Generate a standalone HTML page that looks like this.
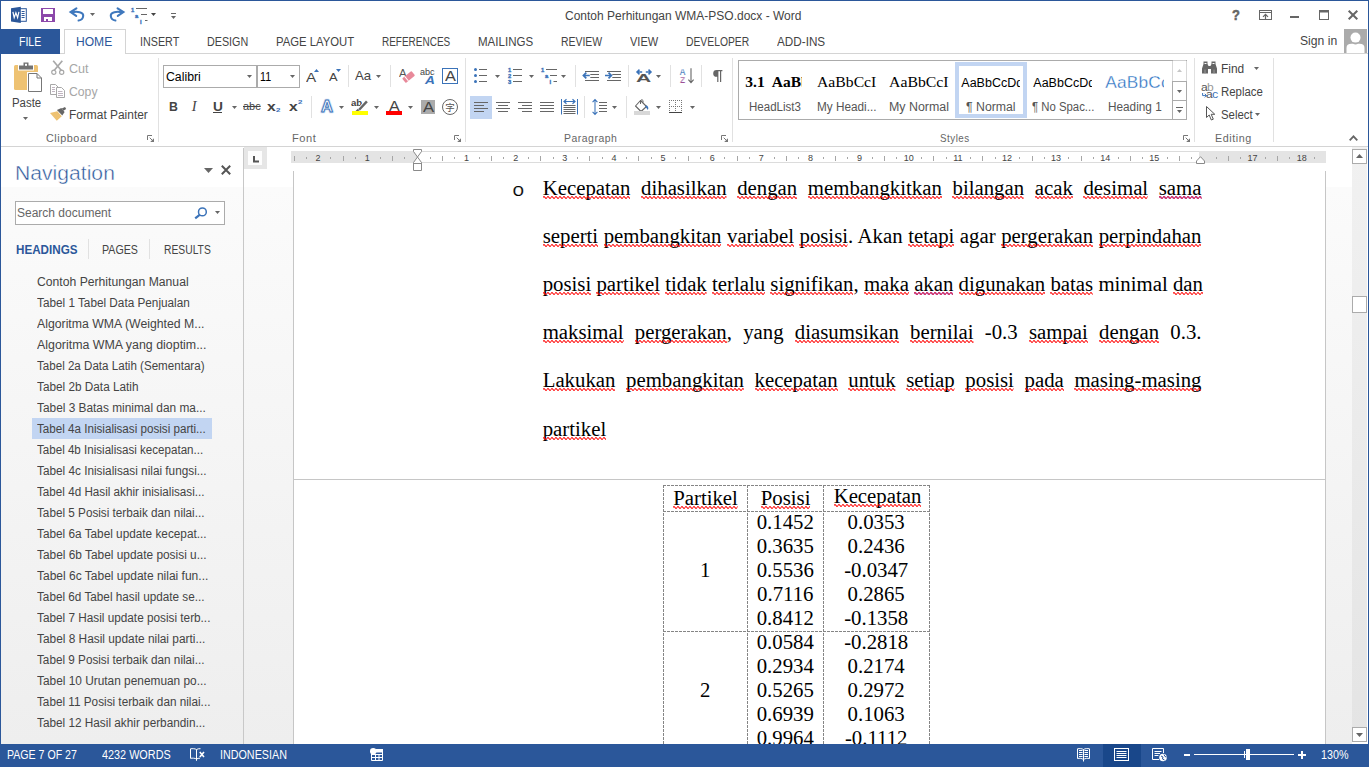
<!DOCTYPE html>
<html lang="id">
<head>
<meta charset="utf-8">
<title>Contoh Perhitungan WMA-PSO.docx - Word</title>
<style>
*{box-sizing:border-box;margin:0;padding:0}
html,body{width:1369px;height:767px;overflow:hidden;background:#fff}
body{position:relative;font-family:"Liberation Sans",sans-serif;font-size:12px;color:#444}
.abs{position:absolute}
.t{position:absolute;white-space:nowrap;line-height:1;transform-origin:0 0}
svg{position:absolute;overflow:visible}
.dl{position:absolute;white-space:nowrap;line-height:1;font-family:"Liberation Serif",serif;font-size:20.8px;color:#000}
.sq{position:relative;display:inline-block}
.z{left:0;top:18.25px;width:100%;height:3px;overflow:hidden}
</style>
</head>
<body>
<svg width="0" height="0" style="left:0;top:0"><defs><pattern id="zz" width="4" height="3" patternUnits="userSpaceOnUse"><path d="M0 1.5L1 0.5L3 2.5L4 1.5" fill="none" stroke="#f00" stroke-width="1.05"/></pattern><pattern id="zb" width="4" height="3" patternUnits="userSpaceOnUse"><path d="M0 1.5L1 0.5L3 2.5L4 1.5" fill="none" stroke="#a9a0f0" stroke-width="2.1"/><path d="M0 1.5L1 0.5L3 2.5L4 1.5" fill="none" stroke="#e8103a" stroke-width="1.05"/></pattern></defs></svg>
<!-- workspace background + navigation pane -->
<div class="abs" style="left:1px;top:147px;width:1367px;height:597px;background:linear-gradient(#fff 0,#fff 40px,#fbfbfb 40px,#eee 100%);"></div>
<div class="abs" style="left:243px;top:148px;width:1px;height:596px;background:#c8c8c8;"></div>
<div class="t" id="t0" style="left:15.4px;top:163.25px;font-size:20.5px;color:#2b579a;-webkit-text-stroke:0.45px #fff;transform:scaleX(1.0312);">Navigation</div>
<svg width="9" height="5" style="left:204px;top:168px"><path d="M0 0H9L4.5 5Z" fill="#666"/></svg>
<svg width="10" height="10" style="left:221px;top:165px"><path d="M0.8 0.8L9.2 9.2M9.2 0.8L0.8 9.2" stroke="#555" stroke-width="2"/></svg>
<div class="abs" style="left:15px;top:201px;width:210px;height:24px;background:#fff;border:1px solid #ababab;"></div>
<div class="t" id="t1" style="left:17.3px;top:207.00px;color:#666;transform:scaleX(1.0004);">Search document</div>
<svg width="14" height="12" style="left:194px;top:207px"><circle cx="8.4" cy="4.9" r="3.9" fill="none" stroke="#3b73b9" stroke-width="1.5"/><path d="M5.6 7.9L1.2 11.3" stroke="#3b73b9" stroke-width="2.2"/></svg>
<svg width="5" height="3" style="left:215px;top:211px"><path d="M0 0H5 L2.5 3 Z" fill="#666"/></svg>
<div class="t" id="t2" style="left:15.8px;top:244.00px;color:#2b579a;font-weight:bold;transform:scaleX(0.9709);">HEADINGS</div>
<div class="abs" style="left:88px;top:239px;width:1px;height:20px;background:#e1e1e1;"></div>
<div class="t" id="t3" style="left:101.7px;top:244.00px;transform:scaleX(0.8871);">PAGES</div>
<div class="abs" style="left:149px;top:239px;width:1px;height:20px;background:#e1e1e1;"></div>
<div class="t" id="t4" style="left:163.8px;top:244.00px;transform:scaleX(0.8592);">RESULTS</div>
<div class="abs" style="left:32px;top:418px;width:180px;height:21px;background:#c2d5f2;"></div>
<div class="t" id="t5" style="left:36.8px;top:276.30px;transform:scaleX(1.0145);">Contoh Perhitungan Manual</div>
<div class="t" id="t6" style="left:36.8px;top:297.30px;transform:scaleX(0.9801);">Tabel 1 Tabel Data Penjualan</div>
<div class="t" id="t7" style="left:36.8px;top:318.30px;transform:scaleX(1.0224);">Algoritma WMA (Weighted M...</div>
<div class="t" id="t8" style="left:36.8px;top:339.30px;transform:scaleX(1.0331);">Algoritma WMA yang dioptim...</div>
<div class="t" id="t9" style="left:36.8px;top:360.30px;transform:scaleX(0.9658);">Tabel 2a Data Latih (Sementara)</div>
<div class="t" id="t10" style="left:36.8px;top:381.30px;transform:scaleX(0.9816);">Tabel 2b Data Latih</div>
<div class="t" id="t11" style="left:36.8px;top:402.30px;transform:scaleX(0.9886);">Tabel 3 Batas minimal dan ma...</div>
<div class="t" id="t12" style="left:36.8px;top:423.30px;transform:scaleX(0.9696);">Tabel 4a Inisialisasi posisi parti...</div>
<div class="t" id="t13" style="left:36.8px;top:444.30px;transform:scaleX(0.9657);">Tabel 4b Inisialisasi kecepatan...</div>
<div class="t" id="t14" style="left:36.8px;top:465.30px;transform:scaleX(0.9817);">Tabel 4c Inisialisasi nilai fungsi...</div>
<div class="t" id="t15" style="left:36.8px;top:486.30px;transform:scaleX(0.9734);">Tabel 4d Hasil akhir inisialisasi...</div>
<div class="t" id="t16" style="left:36.8px;top:507.30px;transform:scaleX(0.9770);">Tabel 5 Posisi terbaik dan nilai...</div>
<div class="t" id="t17" style="left:36.8px;top:528.30px;transform:scaleX(0.9827);">Tabel 6a Tabel update kecepat...</div>
<div class="t" id="t18" style="left:36.8px;top:549.30px;transform:scaleX(0.9905);">Tabel 6b Tabel update posisi u...</div>
<div class="t" id="t19" style="left:36.8px;top:570.30px;transform:scaleX(1.0004);">Tabel 6c Tabel update nilai fun...</div>
<div class="t" id="t20" style="left:36.8px;top:591.30px;transform:scaleX(0.9782);">Tabel 6d Tabel hasil update se...</div>
<div class="t" id="t21" style="left:36.8px;top:612.30px;transform:scaleX(0.9810);">Tabel 7 Hasil update posisi terb...</div>
<div class="t" id="t22" style="left:36.8px;top:633.30px;transform:scaleX(0.9894);">Tabel 8 Hasil update nilai parti...</div>
<div class="t" id="t23" style="left:36.8px;top:654.30px;transform:scaleX(0.9770);">Tabel 9 Posisi terbaik dan nilai...</div>
<div class="t" id="t24" style="left:36.8px;top:675.30px;transform:scaleX(0.9892);">Tabel 10 Urutan penemuan po...</div>
<div class="t" id="t25" style="left:36.8px;top:696.30px;transform:scaleX(0.9785);">Tabel 11 Posisi terbaik dan nilai...</div>
<div class="t" id="t26" style="left:36.8px;top:717.30px;transform:scaleX(0.9817);">Tabel 12 Hasil akhir perbandin...</div>
<!-- ruler -->
<div class="abs" style="left:244px;top:147px;width:23px;height:22px;background:#e6e6e6;"></div>
<div class="abs" style="left:248px;top:151px;width:14px;height:14px;background:#fdfdfd;"></div>
<svg width="6" height="7" style="left:253px;top:156px"><path d="M1 0V5.5H6" fill="none" stroke="#555" stroke-width="2"/></svg>
<div class="abs" style="left:291px;top:151px;width:1035px;height:12px;background:#e4e4e4;"></div>
<div class="abs" style="left:417px;top:151px;width:782px;height:12px;background:#fff;border-top:1px solid #dcdcdc;border-bottom:1px solid #dcdcdc;"></div>
<svg width="1035" height="12" style="left:291px;top:151px"><path d="M3.5 5V10M15.5 6V8M39.5 6V8M52.5 5V10M64.5 6V8M89.5 6V8M101.5 5V10M113.5 6V8M139.5 6V8M151.5 5V10M163.5 6V8M188.5 6V8M200.5 5V10M212.5 6V8M237.5 6V8M249.5 5V10M262.5 6V8M286.5 6V8M298.5 5V10M311.5 6V8M335.5 6V8M347.5 5V10M360.5 6V8M384.5 6V8M397.5 5V10M409.5 6V8M433.5 6V8M446.5 5V10M458.5 6V8M483.5 6V8M495.5 5V10M507.5 6V8M532.5 6V8M544.5 5V10M556.5 6V8M581.5 6V8M593.5 5V10M605.5 6V8M630.5 6V8M642.5 5V10M655.5 6V8M679.5 6V8M691.5 5V10M704.5 6V8M728.5 6V8M741.5 5V10M753.5 6V8M777.5 6V8M790.5 5V10M802.5 6V8M827.5 6V8M839.5 5V10M851.5 6V8M876.5 6V8M888.5 5V10M900.5 6V8M925.5 6V8M937.5 5V10M949.5 6V8M974.5 6V8M986.5 5V10M998.5 6V8M1023.5 6V8" stroke="#a6a6a6" stroke-width="1" fill="none"/><g font-family="Liberation Sans, sans-serif" font-size="9" fill="#444"><text x="27.1" y="10" text-anchor="middle">2</text><text x="76.3" y="10" text-anchor="middle">1</text><text x="175.5" y="10" text-anchor="middle">1</text><text x="224.7" y="10" text-anchor="middle">2</text><text x="273.8" y="10" text-anchor="middle">3</text><text x="322.9" y="10" text-anchor="middle">4</text><text x="372.0" y="10" text-anchor="middle">5</text><text x="421.2" y="10" text-anchor="middle">6</text><text x="470.3" y="10" text-anchor="middle">7</text><text x="519.4" y="10" text-anchor="middle">8</text><text x="568.6" y="10" text-anchor="middle">9</text><text x="617.7" y="10" text-anchor="middle">10</text><text x="666.8" y="10" text-anchor="middle">11</text><text x="716.0" y="10" text-anchor="middle">12</text><text x="765.1" y="10" text-anchor="middle">13</text><text x="814.2" y="10" text-anchor="middle">14</text><text x="863.3" y="10" text-anchor="middle">15</text><text x="961.6" y="10" text-anchor="middle">17</text><text x="1010.7" y="10" text-anchor="middle">18</text></g></svg>
<svg width="9" height="22" style="left:413px;top:149px"><path d="M0.5 0.5H8.5V2.5L4.5 8L8.5 13.5V21.5H0.5V13.5L4.5 8L0.5 2.5Z" fill="#fff" stroke="#8a8a8a" stroke-width="1"/><path d="M0.5 14.5H8.5" stroke="#8a8a8a"/></svg>
<svg width="9" height="8" style="left:1196px;top:156px"><path d="M4.5 0.7L8.5 5V7.5H0.5V5Z" fill="#fff" stroke="#8a8a8a" stroke-width="1"/></svg>
<!-- page -->
<div class="abs" style="left:293px;top:171px;width:1033px;height:573px;background:#fff;border-left:1px solid #c6c6c6;border-right:1px solid #c6c6c6;"></div>
<div class="abs" style="left:293px;top:479px;width:1033px;height:1px;background:#c6c6c6;"></div>
<div class="abs" style="left:1352px;top:147px;width:15px;height:597px;background:linear-gradient(#f1f1f1,#e4e4e4);"></div>
<div class="abs" style="left:1367px;top:147px;width:1px;height:597px;background:#fff;"></div>
<div class="abs" style="left:1352px;top:742px;width:16px;height:2px;background:#fff;"></div>
<div class="abs" style="left:1352px;top:149px;width:15px;height:15px;background:#fff;border:1px solid #ababab;"></div>
<svg width="7" height="4" style="left:1356px;top:154px"><path d="M0 4H7L3.5 0Z" fill="#666"/></svg>
<div class="abs" style="left:1352px;top:296px;width:15px;height:17px;background:#fff;border:1px solid #ababab;"></div>
<div class="abs" style="left:1352px;top:727px;width:15px;height:15px;background:#fff;border:1px solid #ababab;"></div>
<svg width="7" height="4" style="left:1356px;top:733px"><path d="M0 0H7L3.5 4Z" fill="#666"/></svg>
<div class="t" id="bullet" style="left:511.6px;top:182.8px;font-size:17.5px;color:#000;font-family:'Liberation Mono',monospace;-webkit-text-stroke:0.2px #fff;transform:scaleX(1.2)">o</div>
<!-- body text -->
<div class="dl" style="left:542.7px;top:178.00px;width:658.8px;text-align:justify;text-align-last:justify;"><span class="sq">Kecepatan<svg class="z"><rect width="100%" height="3" fill="url(#zz)"/></svg></span> <span class="sq">dihasilkan<svg class="z"><rect width="100%" height="3" fill="url(#zz)"/></svg></span> <span class="sq">dengan<svg class="z"><rect width="100%" height="3" fill="url(#zz)"/></svg></span> <span class="sq">membangkitkan<svg class="z"><rect width="100%" height="3" fill="url(#zz)"/></svg></span> <span class="sq">bilangan<svg class="z"><rect width="100%" height="3" fill="url(#zz)"/></svg></span> <span class="sq">acak<svg class="z"><rect width="100%" height="3" fill="url(#zz)"/></svg></span> <span class="sq">desimal<svg class="z"><rect width="100%" height="3" fill="url(#zz)"/></svg></span> <span class="sq sb">sama<svg class="z"><rect width="100%" height="3" fill="url(#zb)"/></svg></span></div>
<div class="dl" style="left:542.7px;top:226.00px;width:658.8px;text-align:justify;text-align-last:justify;"><span class="sq">seperti<svg class="z"><rect width="100%" height="3" fill="url(#zz)"/></svg></span> <span class="sq">pembangkitan<svg class="z"><rect width="100%" height="3" fill="url(#zz)"/></svg></span> <span class="sq">variabel<svg class="z"><rect width="100%" height="3" fill="url(#zz)"/></svg></span> <span class="sq">posisi<svg class="z"><rect width="100%" height="3" fill="url(#zz)"/></svg></span>. Akan <span class="sq">tetapi<svg class="z"><rect width="100%" height="3" fill="url(#zz)"/></svg></span> agar <span class="sq">pergerakan<svg class="z"><rect width="100%" height="3" fill="url(#zz)"/></svg></span> <span class="sq">perpindahan<svg class="z"><rect width="100%" height="3" fill="url(#zz)"/></svg></span></div>
<div class="dl" style="left:542.7px;top:274.00px;width:658.8px;text-align:justify;text-align-last:justify;"><span class="sq">posisi<svg class="z"><rect width="100%" height="3" fill="url(#zz)"/></svg></span> <span class="sq">partikel<svg class="z"><rect width="100%" height="3" fill="url(#zz)"/></svg></span> <span class="sq">tidak<svg class="z"><rect width="100%" height="3" fill="url(#zz)"/></svg></span> <span class="sq">terlalu<svg class="z"><rect width="100%" height="3" fill="url(#zz)"/></svg></span> <span class="sq">signifikan<svg class="z"><rect width="100%" height="3" fill="url(#zz)"/></svg></span>, <span class="sq">maka<svg class="z"><rect width="100%" height="3" fill="url(#zz)"/></svg></span> <span class="sq sb">akan<svg class="z"><rect width="100%" height="3" fill="url(#zb)"/></svg></span> <span class="sq">digunakan<svg class="z"><rect width="100%" height="3" fill="url(#zz)"/></svg></span> <span class="sq">batas<svg class="z"><rect width="100%" height="3" fill="url(#zz)"/></svg></span> minimal <span class="sq">dan<svg class="z"><rect width="100%" height="3" fill="url(#zz)"/></svg></span></div>
<div class="dl" style="left:542.7px;top:322.00px;width:658.8px;text-align:justify;text-align-last:justify;"><span class="sq">maksimal<svg class="z"><rect width="100%" height="3" fill="url(#zz)"/></svg></span> <span class="sq">pergerakan<svg class="z"><rect width="100%" height="3" fill="url(#zz)"/></svg></span>, yang <span class="sq">diasumsikan<svg class="z"><rect width="100%" height="3" fill="url(#zz)"/></svg></span> <span class="sq">bernilai<svg class="z"><rect width="100%" height="3" fill="url(#zz)"/></svg></span> -0.3 <span class="sq">sampai<svg class="z"><rect width="100%" height="3" fill="url(#zz)"/></svg></span> <span class="sq">dengan<svg class="z"><rect width="100%" height="3" fill="url(#zz)"/></svg></span> 0.3.</div>
<div class="dl" style="left:542.7px;top:370.00px;width:658.8px;text-align:justify;text-align-last:justify;"><span class="sq">Lakukan<svg class="z"><rect width="100%" height="3" fill="url(#zz)"/></svg></span> <span class="sq">pembangkitan<svg class="z"><rect width="100%" height="3" fill="url(#zz)"/></svg></span> <span class="sq">kecepatan<svg class="z"><rect width="100%" height="3" fill="url(#zz)"/></svg></span> <span class="sq">untuk<svg class="z"><rect width="100%" height="3" fill="url(#zz)"/></svg></span> <span class="sq">setiap<svg class="z"><rect width="100%" height="3" fill="url(#zz)"/></svg></span> <span class="sq">posisi<svg class="z"><rect width="100%" height="3" fill="url(#zz)"/></svg></span> <span class="sq">pada<svg class="z"><rect width="100%" height="3" fill="url(#zz)"/></svg></span> <span class="sq">masing-masing<svg class="z"><rect width="100%" height="3" fill="url(#zz)"/></svg></span></div>
<div class="dl" style="left:542.7px;top:419.00px;width:658.8px;"><span class="sq">partikel<svg class="z"><rect width="100%" height="3" fill="url(#zz)"/></svg></span></div>
<!-- table -->
<div class="abs" style="left:663px;top:485px;width:267px;height:1px;background:repeating-linear-gradient(90deg,#858585 0,#858585 3px,transparent 3px,transparent 4px);"></div>
<div class="abs" style="left:663px;top:511px;width:267px;height:1px;background:repeating-linear-gradient(90deg,#858585 0,#858585 3px,transparent 3px,transparent 4px);"></div>
<div class="abs" style="left:663px;top:631px;width:267px;height:1px;background:repeating-linear-gradient(90deg,#858585 0,#858585 3px,transparent 3px,transparent 4px);"></div>
<div class="abs" style="left:663px;top:485px;width:1px;height:259px;background:repeating-linear-gradient(180deg,#858585 0,#858585 3px,transparent 3px,transparent 4px);"></div>
<div class="abs" style="left:747px;top:485px;width:1px;height:259px;background:repeating-linear-gradient(180deg,#858585 0,#858585 3px,transparent 3px,transparent 4px);"></div>
<div class="abs" style="left:823px;top:485px;width:1px;height:259px;background:repeating-linear-gradient(180deg,#858585 0,#858585 3px,transparent 3px,transparent 4px);"></div>
<div class="abs" style="left:929px;top:485px;width:1px;height:259px;background:repeating-linear-gradient(180deg,#858585 0,#858585 3px,transparent 3px,transparent 4px);"></div>
<div class="dl" style="left:645.5px;top:488.00px;width:120px;text-align:center"><span class="sq">Partikel<svg class="z"><rect width="100%" height="3" fill="url(#zz)"/></svg></span></div>
<div class="dl" style="left:725.6px;top:488.00px;width:120px;text-align:center"><span class="sq">Posisi<svg class="z"><rect width="100%" height="3" fill="url(#zz)"/></svg></span></div>
<div class="dl" style="left:817.5px;top:486.00px;width:120px;text-align:center"><span class="sq">Kecepatan<svg class="z"><rect width="100%" height="3" fill="url(#zz)"/></svg></span></div>
<div class="dl" style="left:725.3px;top:512.00px;width:120px;text-align:center">0.1452</div>
<div class="dl" style="left:816.2px;top:512.00px;width:120px;text-align:center">0.0353</div>
<div class="dl" style="left:725.3px;top:536.00px;width:120px;text-align:center">0.3635</div>
<div class="dl" style="left:816.2px;top:536.00px;width:120px;text-align:center">0.2436</div>
<div class="dl" style="left:725.3px;top:560.00px;width:120px;text-align:center">0.5536</div>
<div class="dl" style="left:816.2px;top:560.00px;width:120px;text-align:center">-0.0347</div>
<div class="dl" style="left:725.3px;top:584.00px;width:120px;text-align:center">0.7116</div>
<div class="dl" style="left:816.2px;top:584.00px;width:120px;text-align:center">0.2865</div>
<div class="dl" style="left:725.3px;top:608.00px;width:120px;text-align:center">0.8412</div>
<div class="dl" style="left:816.2px;top:608.00px;width:120px;text-align:center">-0.1358</div>
<div class="dl" style="left:725.3px;top:632.00px;width:120px;text-align:center">0.0584</div>
<div class="dl" style="left:816.2px;top:632.00px;width:120px;text-align:center">-0.2818</div>
<div class="dl" style="left:725.3px;top:656.00px;width:120px;text-align:center">0.2934</div>
<div class="dl" style="left:816.2px;top:656.00px;width:120px;text-align:center">0.2174</div>
<div class="dl" style="left:725.3px;top:680.00px;width:120px;text-align:center">0.5265</div>
<div class="dl" style="left:816.2px;top:680.00px;width:120px;text-align:center">0.2972</div>
<div class="dl" style="left:725.3px;top:704.00px;width:120px;text-align:center">0.6939</div>
<div class="dl" style="left:816.2px;top:704.00px;width:120px;text-align:center">0.1063</div>
<div class="dl" style="left:725.3px;top:728.00px;width:120px;text-align:center">0.9964</div>
<div class="dl" style="left:816.2px;top:728.00px;width:120px;text-align:center">-0.1112</div>
<div class="dl" style="left:645.2px;top:560.00px;width:120px;text-align:center">1</div>
<div class="dl" style="left:645.2px;top:680.00px;width:120px;text-align:center">2</div>
<!-- title bar -->
<svg width="17" height="17" style="left:11px;top:6px"><rect x="8" y="2.7" width="7.3" height="12.6" fill="#fff" stroke="#2b579a" stroke-width="1"/>
<path d="M10.6 5.5h3M10.6 7.5h3M10.6 9.5h3M10.6 11.5h3" stroke="#2b579a" stroke-width="1"/>
<path d="M0 2.2L9.8 0.8V17L0 15.6Z" fill="#2b579a"/>
<path d="M1.9 5.8L3.2 11.6L4.9 6.8L6.6 11.6L7.9 5.8" fill="none" stroke="#fff" stroke-width="1.2" stroke-linejoin="miter"/></svg>
<svg width="14" height="14" style="left:41px;top:8px"><path d="M0 0H14V14H0Z" fill="#8c48aa"/><rect x="2" y="1" width="10" height="5" fill="#fff"/><rect x="3" y="9" width="8" height="4" fill="#fff"/><rect x="5" y="11" width="2" height="2" fill="#8c48aa"/></svg>
<svg width="16" height="15" style="left:69px;top:7px"><path d="M3 5.3C8 4 14.6 5 14.2 9C13.9 12 11.8 13.2 9.6 13.5" fill="none" stroke="#3f78bd" stroke-width="2.1" stroke-linecap="round"/><path d="M7.4 1.3L1.6 5.1L7.2 8.9" fill="none" stroke="#3f78bd" stroke-width="2.1" stroke-linecap="round" stroke-linejoin="miter"/></svg>
<svg width="5" height="3" style="left:90px;top:13px"><path d="M0 0H5 L2.5 3 Z" fill="#666"/></svg>
<svg width="16" height="15" style="left:109px;top:7px"><g transform="translate(16,0) scale(-1,1)"><path d="M3 5.3C8 4 14.6 5 14.2 9C13.9 12 11.8 13.2 9.6 13.5" fill="none" stroke="#3f78bd" stroke-width="2.1" stroke-linecap="round"/><path d="M7.4 1.3L1.6 5.1L7.2 8.9" fill="none" stroke="#3f78bd" stroke-width="2.1" stroke-linecap="round" stroke-linejoin="miter"/></g></svg>
<svg width="17" height="16" style="left:131px;top:7px"><path d="M5 1.5H16M10 7.5H16M14 13.5H16.5" stroke="#666" stroke-width="1"/>
<text x="0" y="4.5" font-size="5.8" font-weight="bold" stroke="#3b73b9" stroke-width="0.35" fill="#3b73b9" font-family="Liberation Sans, sans-serif">1</text>
<text x="4" y="10.5" font-size="5.8" font-weight="bold" stroke="#3b73b9" stroke-width="0.35" fill="#3b73b9" font-family="Liberation Sans, sans-serif">a</text>
<text x="9" y="16.5" font-size="5.8" font-weight="bold" stroke="#3b73b9" stroke-width="0.35" fill="#3b73b9" font-family="Liberation Sans, sans-serif">i</text></svg>
<svg width="5" height="3" style="left:151px;top:13px"><path d="M0 0H5 L2.5 3 Z" fill="#444"/></svg>
<div class="abs" style="left:171px;top:13px;width:5px;height:1px;background:#666;"></div>
<svg width="5" height="3" style="left:171px;top:16px"><path d="M0 0H5 L2.5 3 Z" fill="#666"/></svg>
<div class="t" id="t27" style="left:564.8px;top:9.75px;font-size:12.5px;transform:scaleX(0.9594);">Contoh Perhitungan WMA-PSO.docx - Word</div>
<div class="t" id="t28" style="left:1232.4px;top:8.00px;font-size:14px;color:#666;font-weight:bold;-webkit-text-stroke:0.5px #666;transform:scaleX(0.9226);">?</div>
<svg width="13" height="10" style="left:1259px;top:10px"><rect x="0.5" y="0.5" width="12" height="9" fill="none" stroke="#666"/><path d="M0 2.5H13" stroke="#666"/><path d="M6.5 9V4.4M4 6.8L6.5 4.3L9 6.8" fill="none" stroke="#666" stroke-width="1.2"/></svg>
<div class="abs" style="left:1290px;top:16px;width:9px;height:2px;background:#666;"></div>
<svg width="10" height="10" style="left:1319px;top:10px"><rect x="0.5" y="0.5" width="9" height="9" fill="none" stroke="#666"/><rect x="0" y="0" width="10" height="2.5" fill="#666"/></svg>
<svg width="10" height="10" style="left:1348px;top:10px"><path d="M0.7 0.7L9.3 9.3M9.3 0.7L0.7 9.3" stroke="#666" stroke-width="2"/></svg>
<!-- tabs -->
<div class="abs" style="left:1px;top:53px;width:1367px;height:1px;background:#d4d4d4;"></div>
<div class="abs" style="left:0px;top:29px;width:60px;height:25px;background:#2b579a;"></div>
<div class="abs" style="left:64px;top:29px;width:62px;height:25px;background:#fff;border:1px solid #d4d4d4;border-bottom:none;"></div>
<div class="t" id="t29" style="left:19.4px;top:36.00px;color:#fff;transform:scaleX(0.8760);">FILE</div>
<div class="t" id="t30" style="left:76.4px;top:36.00px;color:#2b579a;transform:scaleX(1.0056);">HOME</div>
<div class="t" id="t31" style="left:140.4px;top:36.00px;transform:scaleX(0.8950);">INSERT</div>
<div class="t" id="t32" style="left:207.4px;top:36.00px;transform:scaleX(0.8953);">DESIGN</div>
<div class="t" id="t33" style="left:276.4px;top:36.00px;transform:scaleX(0.9431);">PAGE LAYOUT</div>
<div class="t" id="t34" style="left:382.4px;top:36.00px;transform:scaleX(0.8315);">REFERENCES</div>
<div class="t" id="t35" style="left:478.4px;top:36.00px;transform:scaleX(0.9624);">MAILINGS</div>
<div class="t" id="t36" style="left:561.4px;top:36.00px;transform:scaleX(0.8702);">REVIEW</div>
<div class="t" id="t37" style="left:630.4px;top:36.00px;transform:scaleX(0.9194);">VIEW</div>
<div class="t" id="t38" style="left:686.4px;top:36.00px;transform:scaleX(0.8615);">DEVELOPER</div>
<div class="t" id="t39" style="left:777.4px;top:36.00px;transform:scaleX(0.9768);">ADD-INS</div>
<div class="t" id="t40" style="left:1300.4px;top:34.75px;font-size:12.5px;transform:scaleX(0.9729);">Sign in</div>
<div class="abs" style="left:1344px;top:29px;width:23px;height:24px;background:#ababab;overflow:hidden"><svg width="23" height="24" style="left:0;top:0"><circle cx="11.5" cy="8.6" r="5" fill="#fff"/><path d="M2.5 24V19Q2.5 14.8 7.5 14.8L9 14.8Q11.5 16.4 14 14.8L15.5 14.8Q20.5 14.8 20.5 19V24Z" fill="#fff"/></svg></div>
<!-- ribbon: clipboard + font -->
<div class="abs" style="left:1px;top:146px;width:1367px;height:1px;background:#d4d4d4;"></div>
<svg width="28" height="30" style="left:14px;top:62px"><rect x="0" y="3" width="24" height="25" rx="1.5" fill="#eec272"/>
<path d="M4 2.5H8.5V-0.5H15.5V2.5H20V8.5H4Z" fill="#fff"/>
<path d="M5 3.5H19V7.5H5Z" fill="#737373"/><path d="M9.5 0.5H14.5V4H9.5Z" fill="#737373"/><rect x="11" y="1.8" width="2" height="2" fill="#fff"/>
<path d="M13 10H24L28 14V30H13Z" fill="#fff"/>
<path d="M14.5 11.5H23L27.5 16V29.5H14.5Z" fill="#fff" stroke="#777" stroke-width="1"/><path d="M23 11.5V16H27.5" fill="none" stroke="#777" stroke-width="1"/></svg>
<div class="t" id="t41" style="left:11.8px;top:97.00px;transform:scaleX(0.9515);">Paste</div>
<svg width="5" height="3" style="left:23px;top:117px"><path d="M0 0H5 L2.5 3 Z" fill="#666"/></svg>
<svg width="14" height="15" style="left:51px;top:60px"><path d="M2.2 0.8L10.6 10.8M11.3 0.8L2.9 10.8" stroke="#a8a8a8" stroke-width="1.7" fill="none"/><circle cx="2.8" cy="12.3" r="2.1" fill="none" stroke="#a8a8a8" stroke-width="1.2"/><circle cx="10.7" cy="12.3" r="2.1" fill="none" stroke="#a8a8a8" stroke-width="1.2"/></svg>
<div class="t" id="t42" style="left:69.0px;top:63.00px;color:#a6a6a6;transform:scaleX(1.0488);">Cut</div>
<svg width="15" height="14" style="left:50px;top:84px"><path d="M0.5 0.5H5.5L8.5 3.5V10.5H0.5Z" fill="#fff" stroke="#a8a8a8"/><path d="M2 3.5H5M2 5.5H5M2 7.5H5" stroke="#c0b4c0"/>
<path d="M6.5 3.5H11.5L14.5 6.5V13.5H6.5Z" fill="#fff" stroke="#a8a8a8"/><path d="M8 7.5H12.5M8 9.5H13M8 11.5H13" stroke="#c0b4c0" stroke-width="1"/></svg>
<div class="t" id="t43" style="left:69.0px;top:86.00px;color:#a6a6a6;transform:scaleX(1.0173);">Copy</div>
<svg width="16" height="14" style="left:50px;top:107px"><path d="M0 6L7.3 4.2L11.8 9.2L6.8 13.8Z" fill="#eec272"/><path d="M6.9 3L11.4 1L14.6 5.1L12.3 8.6Z" fill="#666"/><path d="M11.8 1.5L15 -0.1L16.2 1.9L13.5 3.7Z" fill="#666"/></svg>
<div class="t" id="t44" style="left:69.0px;top:109.00px;transform:scaleX(0.9930);">Format Painter</div>
<div class="t" id="t45" style="left:46.0px;top:132.50px;font-size:11px;color:#666;letter-spacing:0.55px;transform:scaleX(0.9837);">Clipboard</div>
<svg width="7" height="7" style="left:147px;top:135px"><path d="M0.5 5V0.5H5" fill="none" stroke="#777"/><path d="M2.7 2.7L5.5 5.5" fill="none" stroke="#777"/><path d="M7 3.2V7H3.2Z" fill="#777"/></svg>
<div class="abs" style="left:158px;top:58px;width:1px;height:84px;background:#e1e1e1;"></div>
<div class="abs" style="left:163px;top:65px;width:94px;height:23px;background:#fff;border:1px solid #ababab;"></div>
<div class="abs" style="left:257px;top:65px;width:43px;height:23px;background:#fff;border:1px solid #ababab;"></div>
<div class="t" id="t46" style="left:165.8px;top:71.00px;color:#000;transform:scaleX(1.0231);">Calibri</div>
<svg width="5" height="3" style="left:247px;top:75px"><path d="M0 0H5 L2.5 3 Z" fill="#666"/></svg>
<div class="t" id="t47" style="left:260.3px;top:71.00px;color:#000;transform:scaleX(0.8902);">11</div>
<svg width="5" height="3" style="left:290px;top:75px"><path d="M0 0H5 L2.5 3 Z" fill="#666"/></svg>
<div class="t" id="t48" style="left:305.9px;top:70.60px;font-size:13px;transform:scaleX(1.1762);">A</div>
<svg width="5" height="3" style="left:314px;top:69px"><path d="M0 3H5L2.5 0Z" fill="#3b73b9"/></svg>
<div class="t" id="t49" style="left:328.6px;top:72.35px;font-size:10.5px;transform:scaleX(1.2258);">A</div>
<svg width="5" height="3" style="left:336px;top:69px"><path d="M0 0H5 L2.5 3 Z" fill="#3b73b9"/></svg>
<div class="abs" style="left:348px;top:65px;width:1px;height:22px;background:#e1e1e1;"></div>
<div class="t" id="t50" style="left:355.4px;top:69.00px;font-size:13px;transform:scaleX(1.0185);">Aa</div>
<svg width="5" height="3" style="left:376px;top:75px"><path d="M0 0H5 L2.5 3 Z" fill="#666"/></svg>
<div class="abs" style="left:390px;top:65px;width:1px;height:22px;background:#e1e1e1;"></div>
<div class="t" id="t51" style="left:399.3px;top:67.75px;font-size:11.5px;color:#555;transform:scaleX(0.9906);">A</div>
<svg width="14" height="16" style="left:400px;top:68px"><g transform="translate(8.6,9) rotate(-40)"><rect x="-6" y="-2.9" width="12" height="5.8" rx="0.8" fill="#e8899a"/><rect x="-3.2" y="-3" width="1" height="6" fill="#fff"/></g></svg>
<div class="t" id="t52" style="left:420.3px;top:67.75px;font-size:8.5px;transform:scaleX(1.0642);">abc</div>
<div class="t" id="t53" style="left:425.0px;top:74.75px;font-size:10.5px;color:#3b73b9;font-weight:bold;font-style:italic;transform:scaleX(1.3037);">A</div>
<div class="abs" style="left:442px;top:68px;width:16px;height:16px;border:1px solid #3b73b9;"></div>
<div class="t" id="t54" style="left:444.7px;top:68.75px;font-size:14.5px;transform:scaleX(1.1270);">A</div>
<div class="t" id="t55" style="left:169.0px;top:100.75px;font-size:12.5px;font-weight:bold;transform:scaleX(0.9855);">B</div>
<div class="t" id="t56" style="left:191.8px;top:98.75px;font-size:14.5px;font-family:'Liberation Serif',serif;font-style:italic;">I</div>
<div class="t" id="t57" style="left:212.7px;top:100.75px;font-size:12.5px;font-weight:bold;transform:scaleX(1.0962);">U</div>
<div class="abs" style="left:213px;top:112px;width:9px;height:1px;background:#444;"></div>
<svg width="5" height="3" style="left:232px;top:106px"><path d="M0 0H5 L2.5 3 Z" fill="#666"/></svg>
<div class="t" id="t58" style="left:243.4px;top:101.25px;font-size:11.5px;text-decoration:line-through;transform:scaleX(0.9543);">abc</div>
<div class="t" id="t59" style="left:267.4px;top:100.00px;font-size:13px;font-weight:bold;transform:scaleX(1.2026);">x</div>
<div class="t" id="t60" style="left:276.4px;top:108.25px;font-size:5.5px;color:#3b73b9;font-weight:bold;transform:scaleX(1.4367);">2</div>
<div class="t" id="t61" style="left:289.4px;top:100.00px;font-size:13px;font-weight:bold;transform:scaleX(1.2026);">x</div>
<div class="t" id="t62" style="left:298.4px;top:100.25px;font-size:5.5px;color:#3b73b9;font-weight:bold;transform:scaleX(1.4367);">2</div>
<div class="abs" style="left:311px;top:96px;width:1px;height:22px;background:#e1e1e1;"></div>
<svg width="16" height="15" style="left:319px;top:99px"><g font-family="Liberation Sans, sans-serif" font-size="16.5" font-weight="bold" text-anchor="middle"><text x="8" y="13" fill="#fff" stroke="#d5e3f6" stroke-width="2.6" stroke-linejoin="round">A</text><text x="8" y="13" fill="#fff" stroke="#3b73b9" stroke-width="0.95" stroke-linejoin="round">A</text></g></svg>
<svg width="5" height="3" style="left:339px;top:106px"><path d="M0 0H5 L2.5 3 Z" fill="#666"/></svg>
<div class="t" id="t63" style="left:351.4px;top:98.50px;font-size:9px;font-weight:bold;transform:scaleX(1.0651);">ab</div>
<svg width="17" height="12" style="left:352px;top:99px"><path d="M3.5 12L5.5 9.5L13.5 1L16 3L8 11L5.5 12Z" fill="#fff"/><path d="M6.3 10L14 1.6L15.8 3.2L8 11.4Z" fill="#666"/><path d="M3.6 12L5.8 9.8L7.6 11.4L6 12Z" fill="#666"/></svg>
<div class="abs" style="left:352px;top:111px;width:16px;height:4px;background:#ffff00;"></div>
<svg width="5" height="3" style="left:374px;top:106px"><path d="M0 0H5 L2.5 3 Z" fill="#666"/></svg>
<div class="t" id="t64" style="left:388.9px;top:99.00px;font-size:14px;transform:scaleX(1.1452);">A</div>
<div class="abs" style="left:386px;top:111px;width:16px;height:4px;background:#ff0000;"></div>
<svg width="5" height="3" style="left:408px;top:106px"><path d="M0 0H5 L2.5 3 Z" fill="#666"/></svg>
<div class="abs" style="left:421px;top:100px;width:14px;height:14px;background:#ababab;"></div>
<div class="t" id="t65" style="left:422.7px;top:99.75px;font-size:14.5px;transform:scaleX(1.1477);">A</div>
<svg width="16" height="16" style="left:442px;top:99px"><circle cx="8" cy="8" r="7.5" fill="none" stroke="#666" stroke-width="1"/></svg>
<div class="t" style="left:445.3px;top:102.6px;font-size:9.5px;color:#555;font-family:'Liberation Sans','Noto Sans CJK SC',sans-serif">字</div>
<div class="t" id="t66" style="left:292.2px;top:132.50px;font-size:11px;color:#666;letter-spacing:0.55px;transform:scaleX(1.0075);">Font</div>
<svg width="7" height="7" style="left:454px;top:135px"><path d="M0.5 5V0.5H5" fill="none" stroke="#777"/><path d="M2.7 2.7L5.5 5.5" fill="none" stroke="#777"/><path d="M7 3.2V7H3.2Z" fill="#777"/></svg>
<div class="abs" style="left:465px;top:58px;width:1px;height:84px;background:#e1e1e1;"></div>
<!-- ribbon: paragraph -->
<svg width="13" height="15" style="left:474px;top:68px"><circle cx="1.5" cy="1.5" r="1.5" fill="#3b73b9"/><circle cx="1.5" cy="7.5" r="1.5" fill="#3b73b9"/><circle cx="1.5" cy="13.5" r="1.5" fill="#3b73b9"/><path d="M5 1.5H13M5 7.5H13M5 13.5H13" stroke="#666" stroke-width="1" fill="none"/></svg>
<svg width="5" height="3" style="left:495px;top:75px"><path d="M0 0H5 L2.5 3 Z" fill="#666"/></svg>
<svg width="14" height="16" style="left:508px;top:68px"><text x="0" y="4" font-size="5.8" font-weight="bold" stroke="#3b73b9" stroke-width="0.35" fill="#3b73b9" font-family="Liberation Sans, sans-serif">1</text><text x="0" y="10" font-size="5.8" font-weight="bold" stroke="#3b73b9" stroke-width="0.35" fill="#3b73b9" font-family="Liberation Sans, sans-serif">2</text><text x="0" y="16" font-size="5.8" font-weight="bold" stroke="#3b73b9" stroke-width="0.35" fill="#3b73b9" font-family="Liberation Sans, sans-serif">3</text><path d="M5 1.5H14M5 7.5H14M5 13.5H14" stroke="#666" stroke-width="1" fill="none"/></svg>
<svg width="5" height="3" style="left:529px;top:75px"><path d="M0 0H5 L2.5 3 Z" fill="#666"/></svg>
<svg width="16" height="16" style="left:541px;top:68px"><text x="0" y="4" font-size="5.8" font-weight="bold" stroke="#3b73b9" stroke-width="0.35" fill="#3b73b9" font-family="Liberation Sans, sans-serif">1</text><text x="4" y="10" font-size="5.8" font-weight="bold" stroke="#3b73b9" stroke-width="0.35" fill="#3b73b9" font-family="Liberation Sans, sans-serif">a</text><text x="8.5" y="16" font-size="5.8" font-weight="bold" stroke="#3b73b9" stroke-width="0.35" fill="#3b73b9" font-family="Liberation Sans, sans-serif">i</text><path d="M5 1.5H16M9 7.5H16M12.5 13.5H16" stroke="#666" stroke-width="1" fill="none"/></svg>
<svg width="5" height="3" style="left:561px;top:75px"><path d="M0 0H5 L2.5 3 Z" fill="#666"/></svg>
<div class="abs" style="left:575px;top:65px;width:1px;height:22px;background:#e1e1e1;"></div>
<svg width="16" height="11" style="left:583px;top:70px"><path d="M2 1.5H16M7.3 4.5H16M7.3 7.5H16M2 10.5H16" stroke="#666" stroke-width="1" fill="none"/><path d="M0.6 5.5H6.8M3.3 2.6L0.4 5.5L3.3 8.4" fill="none" stroke="#3b73b9" stroke-width="1.7"/></svg>
<svg width="16" height="11" style="left:605px;top:70px"><path d="M2 1.5H16M7.3 4.5H16M7.3 7.5H16M2 10.5H16" stroke="#666" stroke-width="1" fill="none"/><path d="M0 5.5H6.2M3.5 2.6L6.4 5.5L3.5 8.4" fill="none" stroke="#3b73b9" stroke-width="1.7"/></svg>
<div class="abs" style="left:628px;top:65px;width:1px;height:22px;background:#e1e1e1;"></div>
<div class="t" id="t67" style="left:636.4px;top:72.50px;font-size:11px;color:#555;font-weight:bold;transform:scaleX(1.9112);">A</div>
<svg width="16" height="6" style="left:636px;top:69.3px"><path d="M1 3H6.2M3.5 0.6L1 3L3.5 5.4M9.8 3H15M12.5 0.6L15 3L12.5 5.4" fill="none" stroke="#3b73b9" stroke-width="1.5"/></svg>
<svg width="5" height="3" style="left:656px;top:75px"><path d="M0 0H5 L2.5 3 Z" fill="#666"/></svg>
<div class="abs" style="left:670px;top:65px;width:1px;height:22px;background:#e1e1e1;"></div>
<div class="t" id="t68" style="left:679.4px;top:67.75px;font-size:8.5px;color:#3b73b9;font-weight:bold;-webkit-text-stroke:0.25px #fff;">A</div>
<div class="t" id="t69" style="left:679.9px;top:75.75px;font-size:8.5px;color:#9b4f96;font-weight:bold;-webkit-text-stroke:0.25px #fff;">Z</div>
<svg width="6" height="15" style="left:687.5px;top:68px"><path d="M3 0.2V14.4M0.4 11.6L3 14.6L5.6 11.6" fill="none" stroke="#666" stroke-width="1.1"/></svg>
<div class="abs" style="left:701px;top:65px;width:1px;height:22px;background:#e1e1e1;"></div>
<svg width="11" height="12" style="left:711.6px;top:70px"><path d="M4.6 6.8A3.4 3.4 0 0 1 4.6 0H10.4V1.2H9.2V12H8V1.2H6.4V12H5.2V6.8Z" fill="#666"/></svg>
<div class="abs" style="left:470px;top:96px;width:22px;height:23px;background:#c2d5f2;"></div>
<svg width="14" height="10" style="left:474px;top:102px"><path d="M0 0.5H14M0 3.5H10M0 6.5H14M0 9.5H10" stroke="#666" stroke-width="1" fill="none"/></svg>
<svg width="14" height="10" style="left:496px;top:102px"><path d="M0 0.5H14M2 3.5H12M0 6.5H14M2 9.5H12" stroke="#666" stroke-width="1" fill="none"/></svg>
<svg width="14" height="10" style="left:518px;top:102px"><path d="M0 0.5H14M4 3.5H14M0 6.5H14M4 9.5H14" stroke="#666" stroke-width="1" fill="none"/></svg>
<svg width="14" height="10" style="left:540px;top:102px"><path d="M0 0.5H14M0 3.5H14M0 6.5H14M0 9.5H14" stroke="#666" stroke-width="1" fill="none"/></svg>
<svg width="17" height="16" style="left:561px;top:99px"><path d="M0.5 0V15.5M16.5 0V15.5" stroke="#3b73b9" stroke-width="1"/><path d="M3 2.5H14M5.5 0.3L3 2.5L5.5 4.7M11.5 0.3L14 2.5L11.5 4.7" fill="none" stroke="#3b73b9" stroke-width="1.2"/><path d="M2.5 6.5H14.5M2.5 8.5H14.5M2.5 10.5H14.5M2.5 12.5H14.5M2.5 14.5H14.5" stroke="#666" stroke-width="1" fill="none"/></svg>
<div class="abs" style="left:584px;top:96px;width:1px;height:22px;background:#e1e1e1;"></div>
<svg width="15" height="16" style="left:592px;top:99px"><path d="M3 1V15M0.6 3.2L3 0.6L5.4 3.2M0.6 12.8L3 15.4L5.4 12.8" fill="none" stroke="#3b73b9" stroke-width="1.05"/><path d="M7 3.5H15M7 6.5H15M7 9.5H15M7 12.5H15" stroke="#666" stroke-width="1" fill="none"/></svg>
<svg width="5" height="3" style="left:612px;top:106px"><path d="M0 0H5 L2.5 3 Z" fill="#666"/></svg>
<div class="abs" style="left:626px;top:96px;width:1px;height:22px;background:#e1e1e1;"></div>
<svg width="17" height="16" style="left:634px;top:99px"><path d="M6.5 1.5L12.5 7.5L7 12.5L1.5 7Z" fill="#fff" stroke="#666" stroke-width="1.1" stroke-linejoin="round"/><path d="M6.5 5V1.5A1.5 1.5 0 0 1 9 1.5V3.5" fill="none" stroke="#666" stroke-width="1"/><path d="M12.5 6.2C14.5 7.5 14.8 9.5 13.8 11C13 9.5 12 8.5 11 7.8Z" fill="#3b73b9"/></svg>
<div class="abs" style="left:634px;top:111px;width:16px;height:4px;background:#d8d8d8;"></div>
<svg width="5" height="3" style="left:656px;top:106px"><path d="M0 0H5 L2.5 3 Z" fill="#666"/></svg>
<svg width="13" height="13" style="left:669px;top:100px"><path d="M0 0.5H13M0 6.5H13M0.5 0V12M6.5 0V12M12.5 0V12" fill="none" stroke="#777" stroke-width="1" stroke-dasharray="1 1" shape-rendering="crispEdges"/><path d="M0 12.5H13" stroke="#444" stroke-width="1" shape-rendering="crispEdges"/></svg>
<svg width="5" height="3" style="left:690px;top:106px"><path d="M0 0H5 L2.5 3 Z" fill="#666"/></svg>
<div class="t" id="t70" style="left:563.9px;top:132.50px;font-size:11px;color:#666;letter-spacing:0.55px;transform:scaleX(0.9480);">Paragraph</div>
<svg width="7" height="7" style="left:721px;top:135px"><path d="M0.5 5V0.5H5" fill="none" stroke="#777"/><path d="M2.7 2.7L5.5 5.5" fill="none" stroke="#777"/><path d="M7 3.2V7H3.2Z" fill="#777"/></svg>
<div class="abs" style="left:732px;top:58px;width:1px;height:84px;background:#e1e1e1;"></div>
<!-- ribbon: styles + editing -->
<div class="abs" style="left:738px;top:60px;width:449px;height:60px;background:#fff;border:1px solid #ababab;"></div>
<div class="abs" style="left:955px;top:62px;width:72px;height:56px;border:4px solid #c2d5f2;"></div>
<div class="abs" style="left:739px;top:62px;width:63.2px;height:56px;overflow:hidden"><div class="t" id="g1" style="left:6.3px;top:11.75px;font-size:15.5px;color:#000;font-family:'Liberation Serif',serif;font-weight:bold;word-spacing:4px">3.1 AaBb</div></div>
<div class="t" id="t71" style="left:749.2px;top:101.00px;color:#555;transform:scaleX(0.9603);">HeadList3</div>
<div class="t" id="t72" style="left:817.1px;top:73.75px;font-size:15.5px;color:#000;font-family:'Liberation Serif',serif;transform:scaleX(1.0129);">AaBbCcI</div>
<div class="t" id="t73" style="left:817.1px;top:101.00px;color:#555;transform:scaleX(0.9804);">My Headi...</div>
<div class="t" id="t74" style="left:889.0px;top:73.75px;font-size:15.5px;color:#000;font-family:'Liberation Serif',serif;transform:scaleX(1.0180);">AaBbCcI</div>
<div class="t" id="t75" style="left:889.0px;top:101.00px;color:#555;transform:scaleX(1.0342);">My Normal</div>
<div class="abs" style="left:959px;top:66px;width:61.2px;height:30px;overflow:hidden"><div class="t" id="g4" style="left:2.3px;top:10.75px;font-size:12.5px;color:#000;transform:scaleX(1.0);transform-origin:0 0">AaBbCcDd</div></div>
<div class="t" id="t76" style="left:965.8px;top:101.00px;color:#555;transform:scaleX(1.0237);">¶ Normal</div>
<div class="abs" style="left:1031px;top:66px;width:61.2px;height:30px;overflow:hidden"><div class="t" id="g5" style="left:2.3px;top:10.75px;font-size:12.5px;color:#000;transform:scaleX(1.0);transform-origin:0 0">AaBbCcDd</div></div>
<div class="t" id="t77" style="left:1031.9px;top:101.00px;color:#555;transform:scaleX(0.9466);">¶ No Spac...</div>
<div class="abs" style="left:1102px;top:62px;width:62px;height:36px;overflow:hidden"><div class="t" id="g6" style="left:3.2px;top:11.75px;font-size:17.3px;color:#2b72c2;letter-spacing:0.2px;-webkit-text-stroke:0.3px #fff">AaBbCcD</div></div>
<div class="t" id="t78" style="left:1107.9px;top:101.00px;color:#555;transform:scaleX(0.9814);">Heading 1</div>
<div class="abs" style="left:1172px;top:81px;width:1px;height:39px;background:#ababab;"></div>
<div class="abs" style="left:1172px;top:61px;width:1px;height:20px;background:#d8d8d8;"></div>
<div class="abs" style="left:1186px;top:61px;width:1px;height:20px;background:#d8d8d8;"></div>
<div class="abs" style="left:1173px;top:60px;width:13px;height:1px;background:#d0d0d0;"></div>
<div class="abs" style="left:1172px;top:81px;width:15px;height:1px;background:#ababab;"></div>
<div class="abs" style="left:1172px;top:100px;width:15px;height:1px;background:#ababab;"></div>
<svg width="5" height="3" style="left:1177px;top:69px"><path d="M0 3H5L2.5 0Z" fill="#c6c6c6"/></svg>
<svg width="5" height="3" style="left:1177px;top:90px"><path d="M0 0H5 L2.5 3 Z" fill="#666"/></svg>
<div class="abs" style="left:1176px;top:107px;width:7px;height:1px;background:#666;"></div>
<svg width="5" height="3" style="left:1177px;top:110px"><path d="M0 0H5 L2.5 3 Z" fill="#666"/></svg>
<div class="t" id="t79" style="left:940.4px;top:132.50px;font-size:11px;color:#666;letter-spacing:0.55px;transform:scaleX(0.8928);">Styles</div>
<svg width="7" height="7" style="left:1183px;top:135px"><path d="M0.5 5V0.5H5" fill="none" stroke="#777"/><path d="M2.7 2.7L5.5 5.5" fill="none" stroke="#777"/><path d="M7 3.2V7H3.2Z" fill="#777"/></svg>
<div class="abs" style="left:1194px;top:58px;width:1px;height:84px;background:#e1e1e1;"></div>
<svg width="15" height="13" style="left:1202px;top:61px"><path d="M0 12.5V7.5L1.5 3V0.5H5.5V3L6.5 5H8.5L9.5 3V0.5H13.5V3L15 7.5V12.5H9V8H6V12.5Z" fill="#666"/><path d="M2.5 2.5H4.5M10.5 2.5H12.5" stroke="#fff" stroke-width="1"/><path d="M3 8.5V12.5M12 8.5V12.5" stroke="#999" stroke-width="1"/></svg>
<div class="t" id="t80" style="left:1221.0px;top:63.00px;transform:scaleX(0.9938);">Find</div>
<svg width="5" height="3" style="left:1254px;top:67px"><path d="M0 0H5 L2.5 3 Z" fill="#666"/></svg>
<div class="t" id="t81" style="left:1201.4px;top:83.00px;font-size:10px;color:#555;transform:scaleX(1.2045);">a</div>
<div class="t" id="t82" style="left:1207.4px;top:83.00px;font-size:10px;color:#999;transform:scaleX(1.2045);">b</div>
<div class="t" id="t83" style="left:1206.4px;top:89.50px;font-size:10px;color:#555;transform:scaleX(1.2045);">a</div>
<div class="t" id="t84" style="left:1212.4px;top:89.50px;font-size:10px;color:#3b73b9;transform:scaleX(1.2400);">c</div>
<svg width="5" height="5" style="left:1202px;top:93px"><path d="M0.6 0V2.6H4.4M2.8 0.8L4.6 2.6L2.8 4.4" fill="none" stroke="#3b73b9" stroke-width="1"/></svg>
<div class="t" id="t85" style="left:1221.0px;top:86.00px;transform:scaleX(0.9493);">Replace</div>
<svg width="10" height="15" style="left:1206px;top:106px"><path d="M0.5 0.5V11.5L3.2 9L5.3 14L7.3 13.2L5.2 8.3H8.8Z" fill="#fff" stroke="#555" stroke-width="1" stroke-linejoin="round"/></svg>
<div class="t" id="t86" style="left:1221.0px;top:109.00px;transform:scaleX(0.9473);">Select</div>
<svg width="5" height="3" style="left:1255px;top:113px"><path d="M0 0H5 L2.5 3 Z" fill="#666"/></svg>
<div class="t" id="t87" style="left:1215.3px;top:132.50px;font-size:11px;color:#666;letter-spacing:0.55px;transform:scaleX(0.9791);">Editing</div>
<div class="abs" style="left:1273px;top:58px;width:1px;height:84px;background:#e1e1e1;"></div>
<svg width="9" height="6" style="left:1349px;top:135px"><path d="M0.7 5.3L4.5 1.3L8.3 5.3" fill="none" stroke="#666" stroke-width="1.8"/></svg>
<!-- status bar -->
<div class="abs" style="left:0px;top:744px;width:1369px;height:23px;background:#2b579a;"></div>
<div class="t" id="t88" style="left:7.4px;top:749.00px;color:#fff;transform:scaleX(0.8831);">PAGE 7 OF 27</div>
<div class="t" id="t89" style="left:101.7px;top:749.00px;color:#fff;transform:scaleX(0.9036);">4232 WORDS</div>
<svg width="15" height="13" style="left:190px;top:748px"><path d="M6.5 1.5C5 0.6 2.5 0.5 0.5 0.8V10.3C2.5 10 5 10.1 6.5 11V1.5C7.6 0.8 9 0.6 10.5 0.7M6.5 11C7.5 10.4 8.6 10.2 10 10.2M6.5 11V12.8" fill="none" stroke="#fff" stroke-width="1"/><path d="M9.8 4L14 9M14 4L9.8 9" stroke="#fff" stroke-width="1.6"/></svg>
<div class="t" id="t90" style="left:220.4px;top:749.00px;color:#fff;transform:scaleX(0.8957);">INDONESIAN</div>
<svg width="13" height="13" style="left:370px;top:748px"><path d="M6 1.5H12.5V12.5H1.5V6" fill="none" stroke="#fff"/><rect x="6" y="1" width="7" height="3.5" fill="#fff"/><path d="M2 6.5H12.5M2 9.5H12.5M5.5 6.5V12.5M9 6.5V12.5" stroke="#fff" stroke-width="1"/><circle cx="3.2" cy="3.2" r="3.2" fill="#fff"/></svg>
<svg width="14" height="14" style="left:1077px;top:748px"><path d="M6.5 1.5C5 0.5 2.5 0.4 0.5 0.8V10.5C2.5 10.1 5 10.3 6.5 11.5C8 10.3 10.5 10.1 12.5 10.5V0.8C10.5 0.4 8 0.5 6.5 1.5V11.5M6.5 11.5V13.5" fill="none" stroke="#fff" stroke-width="1"/><path d="M2 2.5H5.5M2 4.5H5.5M2 6.5H5.5M2 8.5H5.5M7.5 2.5H11M7.5 4.5H11M7.5 6.5H11M7.5 8.5H11" stroke="#fff" stroke-width="1"/></svg>
<div class="abs" style="left:1103px;top:744px;width:38px;height:23px;background:#19478a;"></div>
<svg width="15" height="13" style="left:1114px;top:748px"><rect x="0.5" y="0.5" width="14" height="12" fill="none" stroke="#fff"/><path d="M2.5 3.5H12.5M2.5 5.5H12.5M2.5 7.5H12.5M2.5 9.5H12.5" stroke="#fff" stroke-width="1"/></svg>
<svg width="16" height="14" style="left:1152px;top:748px"><path d="M7 11.5H0.5V0.5H11.5V5" fill="none" stroke="#fff"/><path d="M2.5 3.5H9.5M2.5 5.5H8M2.5 7.5H6.5" stroke="#fff"/><circle cx="11" cy="9.5" r="3.8" fill="#fff"/><path d="M9 8L11 9L10.5 11L12.5 12M12 6.5L13 8.5L14.5 9" fill="none" stroke="#2b579a" stroke-width="1"/></svg>
<div class="abs" style="left:1184px;top:754px;width:6px;height:2px;background:#fff;"></div>
<div class="abs" style="left:1194px;top:754px;width:100px;height:1px;background:#fff;"></div>
<div class="abs" style="left:1244px;top:751px;width:1px;height:7px;background:#fff;"></div>
<div class="abs" style="left:1246px;top:749px;width:4px;height:11px;background:#fff;"></div>
<div class="abs" style="left:1298px;top:754px;width:8px;height:2px;background:#fff;"></div>
<div class="abs" style="left:1301px;top:751px;width:2px;height:8px;background:#fff;"></div>
<div class="t" id="t91" style="left:1321.1px;top:749.00px;color:#fff;transform:scaleX(0.8957);">130%</div>
<!-- window frame -->
<div class="abs" style="left:0px;top:0px;width:1369px;height:1px;background:#2b579a;"></div>
<div class="abs" style="left:0px;top:0px;width:1px;height:767px;background:#2b579a;"></div>
<div class="abs" style="left:1368px;top:0px;width:1px;height:767px;background:#2b579a;"></div>
</body>
</html>
